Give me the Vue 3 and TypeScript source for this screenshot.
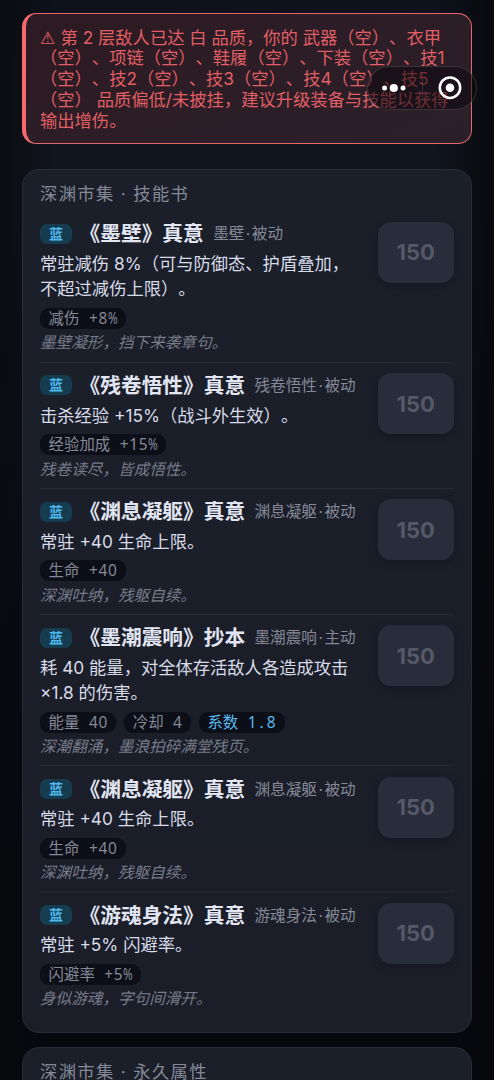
<script setup lang="ts">
interface Stat {
  label: string
  value: string
  accent?: boolean
}

interface Book {
  title: string
  skill: string
  kind: string
  desc: string[]
  stats: Stat[]
  lore: string
  price: number
}

const warning: string[] = [
  '第 2 层敌人已达 白 品质，你的 武器（空）、衣甲',
  '（空）、项链（空）、鞋履（空）、下装（空）、技1',
  '（空）、技2（空）、技3（空）、技4（空）、技5',
  '（空） 品质偏低/未披挂，建议升级装备与技能以获得',
  '输出增伤。',
]

const books: Book[] = [
  {
    title: '《墨壁》真意',
    skill: '墨壁',
    kind: '被动',
    desc: ['常驻减伤 8%（可与防御态、护盾叠加，', '不超过减伤上限）。'],
    stats: [{ label: '减伤', value: '+8%' }],
    lore: '墨壁凝形，挡下来袭章句。',
    price: 150,
  },
  {
    title: '《残卷悟性》真意',
    skill: '残卷悟性',
    kind: '被动',
    desc: ['击杀经验 +15%（战斗外生效）。'],
    stats: [{ label: '经验加成', value: '+15%' }],
    lore: '残卷读尽，皆成悟性。',
    price: 150,
  },
  {
    title: '《渊息凝躯》真意',
    skill: '渊息凝躯',
    kind: '被动',
    desc: ['常驻 +40 生命上限。'],
    stats: [{ label: '生命', value: '+40' }],
    lore: '深渊吐纳，残躯自续。',
    price: 150,
  },
  {
    title: '《墨潮震响》抄本',
    skill: '墨潮震响',
    kind: '主动',
    desc: ['耗 40 能量，对全体存活敌人各造成攻击', '×1.8 的伤害。'],
    stats: [
      { label: '能量', value: '40' },
      { label: '冷却', value: '4' },
      { label: '系数', value: '1.8', accent: true },
    ],
    lore: '深潮翻涌，墨浪拍碎满堂残页。',
    price: 150,
  },
  {
    title: '《渊息凝躯》真意',
    skill: '渊息凝躯',
    kind: '被动',
    desc: ['常驻 +40 生命上限。'],
    stats: [{ label: '生命', value: '+40' }],
    lore: '深渊吐纳，残躯自续。',
    price: 150,
  },
  {
    title: '《游魂身法》真意',
    skill: '游魂身法',
    kind: '被动',
    desc: ['常驻 +5% 闪避率。'],
    stats: [{ label: '闪避率', value: '+5%' }],
    lore: '身似游魂，字句间滑开。',
    price: 150,
  },
]
</script>

<template>
  <main class="page">
    <section class="alert">
      <div v-for="(line, i) in warning" :key="i" class="alert-line">
        <span v-if="i === 0" class="warn">⚠</span>{{ line }}
      </div>
    </section>

    <section class="panel">
      <h2 class="heading">深渊市集 · 技能书</h2>
      <article v-for="(book, i) in books" :key="i" class="book">
        <div class="info">
          <div class="title-row">
            <span class="badge">蓝</span>
            <span class="title">{{ book.title }}</span>
            <span class="sub">{{ book.skill }}<i class="dot">·</i>{{ book.kind }}</span>
          </div>
          <div class="desc">
            <div v-for="line in book.desc" :key="line">{{ line }}</div>
          </div>
          <div class="chips">
            <span v-for="s in book.stats" :key="s.label" class="chip" :class="{ accent: s.accent }">
              <span>{{ s.label }}</span>
              <span class="value"><span v-for="(c, k) in s.value" :key="k" class="cell" :class="{ pct: c === '%' }">{{ c }}</span></span>
            </span>
          </div>
          <p class="lore">{{ book.lore }}</p>
        </div>
        <button class="price" disabled>{{ book.price }}</button>
      </article>
    </section>

    <section class="panel next">
      <h2 class="heading">深渊市集 · 永久属性</h2>
    </section>

    <div class="capsule">
      <svg width="110" height="44" viewBox="0 0 110 44">
        <circle cx="17.6" cy="22" r="2.5" fill="#fff" />
        <circle cx="26.8" cy="22" r="4.1" fill="#fff" />
        <circle cx="36" cy="22" r="2.5" fill="#fff" />
        <path d="M55.5 12v20" stroke="#fff" stroke-opacity=".12" />
        <circle cx="83" cy="21.7" r="10.2" fill="none" stroke="#fff" stroke-width="2.5" />
        <circle cx="83" cy="21.7" r="4.3" fill="#fff" />
      </svg>
    </div>
  </main>
</template>

<style>
body {
  margin: 0;
  background: #07080e;
}
</style>

<style scoped>
.page {
  position: relative;
  box-sizing: border-box;
  width: 494px;
  height: 1080px;
  padding: 13px 22px 0;
  overflow: hidden;
  display: flex;
  flex-direction: column;
  background:
    linear-gradient(90deg, rgba(10, 10, 13, 0.75) 0, rgba(10, 10, 13, 0) 12%, rgba(10, 10, 13, 0) 88%, rgba(8, 8, 11, 0.85) 100%),
    linear-gradient(180deg, #0d121c 0, #111520 15%, #0b0e17 45%, #06080f 75%, #05070d 100%);
  font-family: Inter, 'Noto Sans CJK SC', sans-serif;
  text-spacing-trim: space-all;
  white-space: nowrap;
  color: #d8dbe8;
}

.alert {
  box-sizing: border-box;
  flex: none;
  height: 130.5px;
  padding: 13.6px 0 0 14px;
  border: 1.3px solid #e4686d;
  border-left: 4px solid #f5696f;
  border-radius: 14px;
  background: linear-gradient(160deg, #2d1a22, #2b202a);
  color: #e05f64;
  font-size: 17.3px;
}

.alert-line {
  height: 20.9px;
  line-height: 20.9px;
}

.warn {
  display: inline-block;
  width: 20.5px;
  font-family: 'DejaVu Sans', sans-serif;
  font-size: 17px;
}

.panel {
  box-sizing: border-box;
  flex: none;
  height: 864.5px;
  margin-top: 25px;
  padding: 11px 17px 0;
  border: 1.3px solid #292c37;
  border-radius: 17px;
  background: linear-gradient(180deg, #1b1f2a, #1b1e29);
}

.panel.next {
  margin-top: 14px;
}

.heading {
  margin: 0;
  height: 30.8px;
  line-height: 26px;
  font-size: 17.3px;
  font-weight: 400;
  letter-spacing: 1.35px;
  color: #858997;
}

.book {
  box-sizing: border-box;
  display: flex;
  justify-content: space-between;
  align-items: flex-start;
  padding: 10.2px 0 8.2px;
  border-bottom: 1.3px solid #272a35;
}

.book:last-child {
  border-bottom: 0;
}

.title-row {
  display: flex;
  align-items: center;
  height: 25px;
}

.badge {
  width: 32px;
  height: 20px;
  margin-right: 7.6px;
  border-radius: 7px;
  background: #163c50;
  color: #4fb9ee;
  font-size: 14px;
  font-weight: 700;
  line-height: 19px;
  text-align: center;
}

.title {
  font-size: 20.7px;
  font-weight: 700;
  line-height: 25px;
  color: #e2e5f2;
}

.sub {
  margin-left: 9.4px;
  font-size: 15.6px;
  line-height: 25px;
  color: #858997;
}

.dot {
  display: inline-block;
  width: 7.5px;
  font-style: normal;
  text-align: center;
}

.desc {
  margin-top: 4.8px;
  font-size: 17.3px;
  line-height: 25.2px;
}

.chips {
  display: flex;
  gap: 8px;
  margin-top: 6.2px;
}

.chip {
  display: flex;
  gap: 9.2px;
  height: 21px;
  padding: 0 8.6px;
  border-radius: 9px;
  background: #0d0f18;
  color: #858997;
  font-size: 15.4px;
  line-height: 21px;
}

.chip.accent {
  color: #59b9ef;
}

.value {
  display: flex;
  font-family: 'Noto Sans', sans-serif;
}

.cell {
  width: 9.5px;
  display: flex;
  justify-content: center;
}

.pct {
  transform: scaleX(0.76);
}

.lore {
  margin: 4.6px 0 0;
  height: 20px;
  line-height: 20px;
  font-size: 15.6px;
  font-style: italic;
  color: #777b89;
}

.price {
  flex: none;
  width: 76.5px;
  height: 61px;
  margin-top: 0.2px;
  padding: 0;
  border: 0;
  border-radius: 13px;
  background: #292c3a;
  box-shadow: 0 3px 9px rgba(8, 10, 20, 0.35);
  color: #555967;
  font-family: Inter, sans-serif;
  font-size: 22px;
  font-weight: 700;
}

.capsule {
  position: absolute;
  left: 367px;
  top: 66px;
  box-sizing: border-box;
  width: 110px;
  height: 44px;
  border-radius: 22px;
  background: rgba(12, 8, 14, 0.55);
  box-shadow: inset 0 0 0 1px rgba(150, 160, 150, 0.25);
}

.capsule svg {
  display: block;
}
</style>
